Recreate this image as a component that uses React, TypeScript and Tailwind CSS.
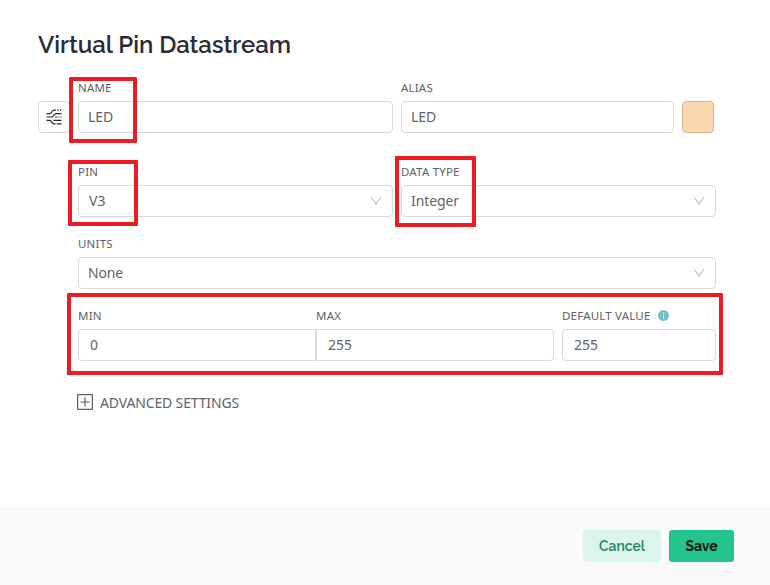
import type { ReactNode } from "react";

function Chevron() {
  return (
    <svg className="mr-[10px] shrink-0" width="12" height="12" viewBox="0 0 12 12" fill="none" stroke="#bfbfbf" strokeWidth="1.1">
      <path d="M1.2 2.2L6 9L10.8 2.2" />
    </svg>
  );
}

function Label({ children, className = "" }: { children: ReactNode; className?: string }) {
  return <div className={`flex h-4 items-center whitespace-nowrap text-[11.5px] leading-4 tracking-[0.2px] text-[#5f6063] ${className}`}>{children}</div>;
}

function Box({ children, className = "", select = false }: { children: ReactNode; className?: string; select?: boolean }) {
  return (
    <div className={`mt-[5px] flex h-8 items-center justify-between border border-[#d9d9d9] bg-white text-sm text-[#626366] ${className}`}>
      {children}
      {select && <Chevron />}
    </div>
  );
}

export default function App() {
  return (
    <div className="relative flex h-[585px] w-[770px] flex-col overflow-hidden bg-white font-['Noto_Sans',sans-serif]">
      <main className="h-[506px] pl-[38px] pt-[28px]">
        <h1 className="h-[52px] whitespace-nowrap font-['Raleway','Lato',sans-serif] text-[24px] font-semibold leading-[34px] tracking-[-0.03px] text-[#2b2c35]">
          Virtual Pin Datastream
        </h1>
        <div className="flex">
          <div className="mt-[21px] flex h-8 w-8 shrink-0 items-center justify-center rounded border border-[#d9d9d9]">
            <svg width="16" height="16" viewBox="0 0 16 16" fill="none" stroke="#242630" strokeWidth="1.2">
              <path d="M0.5 4.6H3.5C6.5 4.6 5 1.2 8.5 1.2H10M11.2 1.2H12.8M14 1.2H15.5" />
              <path d="M0.5 8H5.5C8.5 8 7.5 4.6 10.5 4.6H15.5" />
              <path d="M0.5 11.4H3.5C6 11.4 5.5 14.8 8 14.8H9.5M10.8 14.8H15.5" />
              <path d="M9.2 8H11M12.2 8H13.4M14.4 8H15.5M7.5 11.4H15.5" />
            </svg>
          </div>
          <div className="ml-2 w-[638px]">
            <div className="flex gap-2">
              <div className="w-[315px]"><Label>NAME</Label><Box className="rounded pl-[9px]">LED</Box></div>
              <div className="w-[273px]"><Label>ALIAS</Label><Box className="rounded pl-[9px]">LED</Box></div>
              <div className="mt-[21px] h-8 w-8 rounded border border-[#d5b794] bg-[#fcd7ae]" />
            </div>
            <div className="mt-[31px] flex gap-2">
              <div className="w-[315px]"><Label>PIN</Label><Box select className="rounded pl-[10px]">V3</Box></div>
              <div className="w-[315px]"><Label>DATA TYPE</Label><Box select className="rounded pl-[9px] tracking-[-0.1px]">Integer</Box></div>
            </div>
            <div className="mt-[19px]"><Label>UNITS</Label><Box select className="rounded pl-[9px] tracking-[-0.2px]">None</Box></div>
            <div className="mt-[19px] flex">
              <div className="w-[238px]"><Label>MIN</Label><Box className="rounded-l pl-[11px]">0</Box></div>
              <div className="w-[238px]"><Label>MAX</Label><Box className="rounded-r pl-[11px]">255</Box></div>
              <div className="ml-2 w-[154px]">
                <Label>
                  <span>DEFAULT VALUE</span>
                  <svg className="mb-px ml-[7px]" width="11" height="11" viewBox="0 0 11 11">
                    <circle cx="5.5" cy="5.5" r="5.5" fill="#78bfc2" />
                    <path d="M5.5 2.3V3.4M5.5 4.5V8.5" stroke="#fff" strokeWidth="1" />
                  </svg>
                </Label>
                <Box className="rounded pl-[11px]">255</Box>
              </div>
            </div>
            <div className="-ml-px mt-[32px] flex h-5 items-center text-sm leading-5 tracking-[-0.15px] text-[#626366]">
              <svg className="mb-[2px] mr-[7px]" width="16" height="16" viewBox="0 0 16 16" fill="none" stroke="#5c5d60">
                <rect x="0.6" y="0.6" width="14.8" height="14.8" rx="0.5" strokeWidth="1.2" />
                <path d="M8 3.5V12.5M3.5 8H12.5" strokeWidth="1.2" />
              </svg>
              <span>ADVANCED SETTINGS</span>
            </div>
          </div>
        </div>
      </main>
      <footer className="flex h-[79px] justify-end gap-2 bg-[#fafafa] pr-9 pt-6 font-['Raleway','Lato',sans-serif] text-sm">
        <button className="h-8 w-[78px] rounded-[3px] bg-[#dcf5ec] font-semibold text-[#218660]">Cancel</button>
        <button className="h-8 w-[65px] rounded-[3px] bg-[#24c48e] font-bold text-[#03130d]">Save</button>
      </footer>
      <div className="absolute left-[69px] top-[77px] h-[66px] w-[68px] rounded-[1px] border-4 border-[#ed1c24]" />
      <div className="absolute left-[68px] top-[160px] h-[66px] w-[70px] rounded-[1px] border-4 border-[#ed1c24]" />
      <div className="absolute left-[395px] top-[156px] h-[71px] w-[81px] rounded-[1px] border-4 border-[#ed1c24]" />
      <div className="absolute left-[67px] top-[293px] h-[82px] w-[656px] rounded-[1px] border-4 border-[#ed1c24]" />
    </div>
  );
}
